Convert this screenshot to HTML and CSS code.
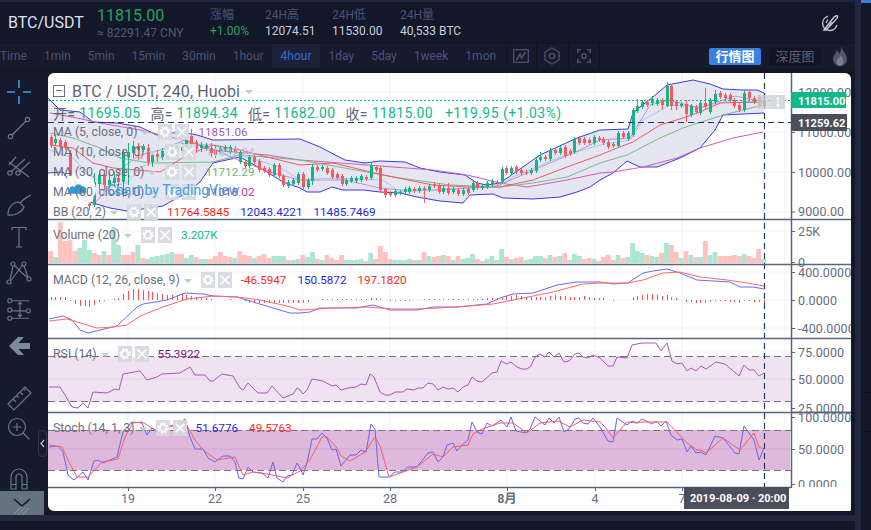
FILE: index.html
```html
<!DOCTYPE html>
<html lang="zh">
<head>
    <meta charset="UTF-8">
    <meta name="viewport" content="width=device-width, initial-scale=1.0">
    <title>BTC/USDT</title>
    <link rel="stylesheet" href="styles.css">
</head>
<body>
    <svg class="defs" width="0" height="0">
        <symbol id="gear" viewBox="0 0 14 16">
            <circle cx="7" cy="8" r="3.4" fill="none" stroke="#fff" stroke-width="2"/>
            <circle cx="7" cy="8" r="4.9" fill="none" stroke="#fff" stroke-width="1.4" stroke-dasharray="2 1.85"/>
        </symbol>
        <symbol id="cross" viewBox="0 0 14 16">
            <path d="M2.5 3.5 L11.5 12.5 M11.5 3.5 L2.5 12.5" stroke="#fff" stroke-width="1.6"/>
        </symbol>
    </svg>

    <div class="app">
        <div class="workspace">
            <header class="ticker">
                <div class="symbol">BTC/USDT</div>
                <div class="last">
                    <div class="last-price">11815.00</div>
                    <div class="last-cny">≈ 82291.47 CNY</div>
                </div>
                <div class="stat stat-change"><span class="stat-name">涨幅</span><span class="stat-up">+1.00%</span></div>
                <div class="stat stat-high"><span class="stat-name">24H高</span><span class="stat-value">12074.51</span></div>
                <div class="stat stat-low"><span class="stat-name">24H低</span><span class="stat-value">11530.00</span></div>
                <div class="stat"><span class="stat-name">24H量</span><span class="stat-value">40,533 BTC</span></div>
                <svg class="theme-icon" viewBox="0 0 18 18" width="18" height="18">
                    <path d="M7 2.300 A7.200 7.200 0 1 0 15.800 11" fill="none" stroke="#b4b8c3" stroke-width="1.500"/>
                    <path d="M3 16 L13 3 Q16 0.8 16.6 2.2 Q17 4 14.5 6 L5 16 Z" fill="none" stroke="#c6cad3" stroke-width="1.400"/>
                    <path d="M7 5.5 L5 9 M10.5 8 L8 12" stroke="#c6cad3" stroke-width="1.300"/>
                </svg>
            </header>

            <nav class="intervals">
                <a class="interval">Time</a>
                <a class="interval">1min</a>
                <a class="interval">5min</a>
                <a class="interval">15min</a>
                <a class="interval">30min</a>
                <a class="interval">1hour</a>
                <a class="interval active">4hour</a>
                <a class="interval">1day</a>
                <a class="interval">5day</a>
                <a class="interval">1week</a>
                <a class="interval">1mon</a>
                <span class="tool-cell first">
                    <svg viewBox="0 0 16 14" width="16" height="14">
                        <path d="M0.7 0.7 H15.3 V13.3 H0.7 Z" fill="none" stroke="#4a506c" stroke-width="1.3"/>
                        <path d="M3.5 11 L7 5 L8.5 9 L12.5 3" fill="none" stroke="#4a506c" stroke-width="1.6"/>
                    </svg>
                </span>
                <span class="tool-cell">
                    <svg viewBox="0 0 16 18" width="16" height="18">
                        <path d="M8 1 L15 5 V13 L8 17 L1 13 V5 Z" fill="none" stroke="#4a506c" stroke-width="1.4"/>
                        <circle cx="8" cy="9" r="2.6" fill="none" stroke="#4a506c" stroke-width="1.4"/>
                    </svg>
                </span>
                <span class="tool-cell">
                    <svg viewBox="0 0 14 14" width="14" height="14">
                        <path d="M0.7 4 V0.7 H4 M10 0.7 H13.3 V4 M13.3 10 V13.3 H10 M4 13.3 H0.7 V10" fill="none" stroke="#4a506c" stroke-width="1.4"/>
                        <circle cx="7" cy="7" r="2.4" fill="none" stroke="#4a506c" stroke-width="1.4"/>
                    </svg>
                </span>
                <a class="view-btn on">行情图</a>
                <a class="view-btn">深度图</a>
                <svg class="flame" viewBox="0 0 14 20" width="14" height="20">
                    <path d="M8 0 C9 5 14 7 14 13 C14 17 11 20 7 20 C3 20 0 17 0 13 C0 9 3 8 4 4 C5 5 6 7 6 8 C7.500 6 8.500 3 8 0 Z" fill="#50556a"/>
                    <path d="M8 9 C9 12 10.500 13 10.500 15.500 C10.500 18 9 20 7 20 C5 20 3.500 18 3.500 16 C3.500 13.500 6.500 12.500 8 9 Z" fill="#7b8092"/>
                </svg>
            </nav>

            <div class="body-row">
                <aside class="tools">
                    <svg class="tool" viewBox="0 0 24 24"><path d="M12 0 V8 M12 16 V24 M0 12 H8 M16 12 H24" class="tool-on"/></svg>
                    <svg class="tool" viewBox="0 0 24 24"><circle cx="3.500" cy="20.500" r="2.200"/><circle cx="20.500" cy="3.500" r="2.200"/><path d="M5 19 L19 5"/></svg>
                    <svg class="tool" viewBox="0 0 24 24"><circle cx="3" cy="20" r="2.200"/><circle cx="11" cy="20" r="2.200"/><path d="M2 9 L22 24 M4.500 18.500 L18 6 M12.500 18.500 L23 9 M2 12 L9 4"/></svg>
                    <svg class="tool" viewBox="0 0 24 24"><path d="M1 22 C0.500 15 6 9 12 9 L17 14 C15 19 8 23 1 22 Z M14 10 C15 6 19 5 24 2"/></svg>
                    <svg class="tool" viewBox="0 0 24 24"><path d="M5 2 C5 3 5 4 5 5 M5 2.500 H19 M19 2 V5 M12 2.500 V22 M9 22 H15"/></svg>
                    <svg class="tool" viewBox="0 0 24 24"><circle cx="6" cy="3" r="2"/><circle cx="17" cy="3" r="2"/><circle cx="2" cy="21" r="2"/><circle cx="22" cy="18" r="2"/><path d="M7.500 4.500 L14 11 L21 17 M15.500 4 L4 19.500 M6 5 L3 19 M17 5 L21 16"/></svg>
                    <svg class="tool" viewBox="0 0 26 24"><circle cx="3" cy="3" r="2.200"/><circle cx="3" cy="13" r="2.200"/><circle cx="3" cy="22" r="2.200"/><circle cx="23" cy="14" r="2.200"/><path d="M5 3 H24 M5 14 H21 M5 22 H24 M14 5 V20 M12 7 L14 4.500 L16 7 M12 18 L14 20.500 L16 18"/></svg>
                    <svg class="tool" viewBox="0 0 24 24"><path class="tool-solid" d="M2 12 L11 3 H17 L11.500 9 H23 V15 H11.500 L17 21 H11 Z"/></svg>
                    <svg class="tool" viewBox="0 0 24 24"><path d="M1 18 L18 1 L24 7 L7 24 Z M6 13 L9 16 M9.500 9.500 L11.500 11.500 M13 6 L16 9 M16.500 2.500 L18.500 4.500"/></svg>
                    <svg class="tool" viewBox="0 0 24 24"><circle cx="10" cy="10" r="8.500"/><path d="M10 6 V14 M6 10 H14 M16 16 L22.500 22.500"/></svg>
                    <svg class="tool" viewBox="0 0 24 24"><path d="M4 23 V11 A8 8 0 0 1 20 11 V23 H15 V11 A3 3 0 0 0 9 11 V23 Z M4 18.500 H9 M15 18.500 H20"/></svg>
                    <div class="tool-more">
                        <svg viewBox="0 0 18 17" width="18" height="17">
                            <path d="M1 1 L9 8 L17 1" fill="none" stroke="#14181f" stroke-width="1.500"/>
                            <path d="M1 16 L9 8.500 M5 17 L13 9 M9 17 L16 10" fill="none" stroke="#818c97" stroke-width="1.200"/>
                        </svg>
                    </div>
                    <span class="collapse">
                        <svg viewBox="0 0 5 9" width="5" height="9"><path d="M4 1 L1 4.500 L4 8" fill="none" stroke="#c3c7d2" stroke-width="1.200"/></svg>
                    </span>
                </aside>

                <main class="chart">
                    <svg id="plot" class="plot" viewBox="48 73 803 438" width="803" height="438"></svg>

                    <section class="pane pane-main">
                        <div class="title-row">
                            <span class="fold"></span>
                            <span class="title">BTC / USDT, 240, Huobi</span><i class="caret"></i>
                        </div>
                        <div class="ohlc">
                            <span class="ohlc-name">开=</span><span class="ohlc-val">11695.05</span>
                            <span class="ohlc-name">高=</span><span class="ohlc-val">11894.34</span>
                            <span class="ohlc-name">低=</span><span class="ohlc-val">11682.00</span>
                            <span class="ohlc-name">收=</span><span class="ohlc-val">11815.00</span>
                            <span class="ohlc-val ohlc-diff">+119.95 (+1.03%)</span>
                        </div>
                        <div class="study">
                            <span class="study-name">MA (5, close, 0)</span><i class="caret"></i>
                            <span class="study-btn"><svg><use href="#gear"/></svg></span><span class="study-btn"><svg><use href="#cross"/></svg></span>
                            <span class="val c-purple">11851.06</span>
                        </div>
                        <div class="study">
                            <span class="study-name">MA (10, close, 0)</span><i class="caret"></i>
                            <span class="study-btn"><svg><use href="#gear"/></svg></span><span class="study-btn"><svg><use href="#cross"/></svg></span>
                            <span class="val c-sky">11827.24</span>
                        </div>
                        <div class="study">
                            <span class="study-name">MA (30, close, 0)</span><i class="caret"></i>
                            <span class="study-btn"><svg><use href="#gear"/></svg></span><span class="study-btn"><svg><use href="#cross"/></svg></span>
                            <span class="val c-green">11712.29</span>
                        </div>
                        <div class="study">
                            <span class="study-name">MA (60, close, 0)</span><i class="caret"></i>
                            <span class="study-btn"><svg><use href="#gear"/></svg></span><span class="study-btn"><svg><use href="#cross"/></svg></span>
                            <span class="val c-magenta">11018.02</span>
                        </div>
                        <div class="study">
                            <span class="study-name">BB (20, 2)</span><i class="caret"></i>
                            <span class="study-btn"><svg><use href="#gear"/></svg></span><span class="study-btn"><svg><use href="#cross"/></svg></span>
                            <span class="val c-red">11764.5845</span>
                            <span class="val c-blue">12043.4221</span>
                            <span class="val c-blue">11485.7469</span>
                        </div>
                        <div class="watermark">
                            <span class="wm-logo">
                                <svg viewBox="0 0 24 14" width="20" height="12"><path d="M5 14 C1 14 0 10 3 8.500 C3 5 7 4 9 6 C10 2 16 1 18 5 C22 5 24 8 23 11 C22.500 13 21 14 19 14 Z" fill="#2f9fe0"/></svg>
                            </span>
                            <span class="wm-text">Chart by TradingView</span>
                        </div>
                    </section>

                    <section class="pane pane-vol">
                        <div class="study">
                            <span class="study-name">Volume (20)</span><i class="caret"></i>
                            <span class="study-btn"><svg><use href="#gear"/></svg></span><span class="study-btn"><svg><use href="#cross"/></svg></span>
                            <span class="val c-teal">3.207K</span>
                        </div>
                    </section>

                    <section class="pane pane-macd">
                        <div class="study">
                            <span class="study-name">MACD (12, 26, close, 9)</span><i class="caret"></i>
                            <span class="study-btn"><svg><use href="#gear"/></svg></span><span class="study-btn"><svg><use href="#cross"/></svg></span>
                            <span class="val c-red">-46.5947</span>
                            <span class="val c-blue">150.5872</span>
                            <span class="val c-red">197.1820</span>
                        </div>
                    </section>

                    <section class="pane pane-rsi">
                        <div class="study">
                            <span class="study-name">RSI (14)</span><i class="caret"></i>
                            <span class="study-btn"><svg><use href="#gear"/></svg></span><span class="study-btn"><svg><use href="#cross"/></svg></span>
                            <span class="val c-plum">55.3922</span>
                        </div>
                    </section>

                    <section class="pane pane-stoch">
                        <div class="study">
                            <span class="study-name">Stoch (14, 1, 3)</span><i class="caret"></i>
                            <span class="study-btn"><svg><use href="#gear"/></svg></span><span class="study-btn"><svg><use href="#cross"/></svg></span>
                            <span class="val c-blue">51.6776</span>
                            <span class="val c-red">49.5763</span>
                        </div>
                    </section>
                </main>
            </div>

            <div class="foot-strip"></div>
        </div>

        <div class="rail">
            <div class="rail-tab"></div>
            <div class="rail-line"></div>
            <div class="rail-line second"></div>
        </div>
    </div>

    <script src="chart.js"></script>
</body>
</html>
```

FILE: styles.css
```css
* { box-sizing: border-box; }
html, body { margin: 0; height: 100%; }
body { background: #131728; font-family: Roboto, "Noto Sans CJK SC", sans-serif; overflow: hidden; }
.defs { position: absolute; }
.app { display: flex; width: 871px; height: 530px; }
.workspace { width: 855px; border-top: 2px solid #22273f; }

/* top ticker */
.ticker { display: flex; align-items: center; height: 42px; background: #13172a; border-bottom: 1px solid #0f1322; padding-left: 8px; position: relative; }
.symbol { width: 89px; font-size: 16px; color: #dde1ec; }
.last { width: 113px; }
.last-price { font-size: 16px; line-height: 20px; color: #27a35e; }
.last-cny { font-size: 12px; line-height: 14px; color: #535a78; }
.stat { display: flex; flex-direction: column; width: 55px; font-size: 12px; line-height: 16px; }
.stat-high { width: 67px; }
.stat-low { width: 68px; }
.stat-name { color: #4c5375; }
.stat-up { color: #27a35e; }
.stat-value { color: #c9cede; white-space: nowrap; }
.theme-icon { margin-left: auto; margin-right: 16px; }

/* interval bar */
.intervals { display: flex; align-items: center; height: 24px; background: #161a2d; margin-bottom: 5px; padding-left: 0; }
.interval { font-size: 12px; line-height: 24px; padding: 0 8.5px; color: #4c5375; white-space: nowrap; }
.interval:first-child { margin-left: -8.5px; }
.interval.active { background: #1c2138; color: #2d6fd9; }
.tool-cell { display: flex; align-items: center; justify-content: center; width: 31.500px; height: 24px; border-right: 1px solid #10131f; }
.tool-cell.first { border-left: 1px solid #10131f; margin-left: 1px; }
.view-btn { width: 52px; height: 17px; line-height: 17px; text-align: center; font-size: 13px; border-radius: 2px; background: #111423; color: #5b6077; margin-right: 8px; }
.view-btn.on { margin-left: auto; background: #3b80e0; color: #fff; font-weight: 700; }
.flame { margin: 0 8px 0 4px; }

/* body */
.body-row { display: flex; height: 438px; }
.tools { position: relative; width: 48px; padding: 7px 0 0 7px; background: #161a2d; display: grid; grid-template-columns: 24px; grid-template-rows: 36px 37px 40px 32px 36px 36px 37px 52px 31px 49px 25px; }
.tool { width: 24px; height: 24px; overflow: visible; fill: none; stroke: #66788c; stroke-width: 1.2; }
.tool-on { stroke: #35a7d8; stroke-width: 1.5; }
.tool-solid { fill: #7c8a99; stroke: none; }
.tool-more { display: flex; justify-content: center; padding-top: 7px; width: 44px; height: 24px; margin-left: -7px; background: #66727f; }
.collapse { position: absolute; left: 38px; top: 357px; z-index: 2; width: 9px; height: 27px; display: flex; align-items: center; justify-content: center; background: #161a2d; border: 1px solid #343a50; border-radius: 4px; }

/* chart */
.chart { position: relative; width: 803px; height: 438px; background: #fff; overflow: hidden; border-radius: 6px 6px 2px 6px; }
.plot { position: absolute; left: 0; top: 0; display: block; }
.pane { position: relative; padding: 6px 0 0 5px; }
.pane-main { height: 147px; padding-top: 9px; }
.pane-vol { height: 45px; }
.pane-macd { height: 74px; }
.pane-rsi { height: 74px; }
.pane-stoch { height: 75px; }

.title-row { display: flex; align-items: center; height: 18px; margin-bottom: 3px; }
.fold { width: 12px; height: 12px; margin-right: 7px; border: 1px solid #69707f; position: relative; }
.fold::after { content: ""; position: absolute; left: 2px; right: 2px; top: 4px; border-top: 1px solid #69707f; }
.title { font-size: 16px; letter-spacing: .12px; color: #5d6478; }
.title + .caret { margin-left: 5px; }
.ohlc { display: flex; align-items: center; height: 19px; font-size: 14px; letter-spacing: .3px; }
.ohlc-name { color: #5d6478; margin-right: 4px; }
.ohlc-val { color: #14b88a; margin-right: 10px; }
.ohlc-diff { margin-left: 2px; letter-spacing: .45px; }

.study { position: relative; z-index: 1; display: flex; align-items: center; height: 20px; font-size: 12.300px; color: #6a6f7e; white-space: nowrap; }
.pane:not(.pane-main) .study { height: 18px; }
.caret { display: inline-block; width: 0; height: 0; border-left: 4.500px solid transparent; border-right: 4.500px solid transparent; border-top: 4.500px solid #c5c9cf; margin: 1px 9px 0 4px; }
.study-btn { display: block; width: 14px; height: 16px; margin-right: 3px; background: #d6d9de; opacity: .92; }
.study-btn svg { display: block; width: 14px; height: 16px; }
.val { font-size: 11.700px; margin: 0 11px 0 6px; }
.val + .val { margin-left: 0; }
.c-purple { color: #9a5fc0; }
.c-sky { color: #a8c4e6; }
.c-green { color: #6fb07e; }
.c-magenta { color: #ae3a9d; }
.c-red { color: #ff1f1f; }
.c-blue { color: #1f1fe8; }
.c-teal { color: #14b88a; }
.c-plum { color: #850f85; }

/* logo sits under the legend rows, the words over them */
.watermark { position: absolute; left: 14px; top: 100px; display: flex; align-items: center; }
.wm-logo { position: relative; z-index: 0; display: flex; align-items: center; justify-content: flex-start; padding: 0 0 4px 5px; width: 34px; height: 34px; border-radius: 50%; background: rgba(255, 255, 255, .9); }
.wm-text { position: relative; z-index: 2; margin-left: 11px; font-size: 14px; color: #3d9fe0; }

.foot-strip { margin-top: 4px; height: 6px; background: #22273f; }

/* right rail */
.rail { position: relative; width: 16px; border-left: 6px solid #22273f; background: #131728; }
.rail-tab { height: 3px; background: #3a7ddb; }
.rail-line { margin-top: 389px; border-top: 1px solid #0d101c; }
.rail-line.second { margin-top: 38px; }

/* svg parts, set from chart.js */
.grid { stroke: #f1f3f7; stroke-width: 1; }
.sep { stroke: #5a6579; stroke-width: 1.5; }
.tick { stroke: #5a6579; stroke-width: 1; }
.axis-text { font: 12.500px Roboto, sans-serif; fill: #666c80; letter-spacing: .1px; }
.time-text { font: 12.500px Roboto, "Noto Sans CJK SC", sans-serif; fill: #666c80; text-anchor: middle; }
.time-bold { font-weight: 700; }
.tag-text { font: 700 11px Roboto, sans-serif; fill: #fff; }
.line { fill: none; stroke-width: 1; stroke-linejoin: round; }
```

FILE: chart.js
```js
// 240 min BTC/USDT chart, everything below is in page pixels
var NS = 'http://www.w3.org/2000/svg';
var plot = document.getElementById('plot');

function el(tag, attrs, text) {
    var n = document.createElementNS(NS, tag);
    for (var k in attrs) n.setAttribute(k, attrs[k]);
    if (text) n.textContent = text;
    plot.appendChild(n);
    return n;
}
function line(x1, y1, x2, y2, cls, extra) {
    var a = { x1: x1, y1: y1, x2: x2, y2: y2, 'class': cls || '' };
    for (var k in extra) a[k] = extra[k];
    return el('line', a);
}
function poly(points, color, width, op) {
    el('polyline', { points: points, 'class': 'line', stroke: color, 'stroke-width': width || 1, opacity: op || 1 });
}

var GREEN = '#17b383', RED = '#f25c5f';
var STEP = 4.85, LAST_X = 763.5;

var candles = ('r137,145,135,148 g139,143,135,146 r140,147 r142,148 r153,177,150,179 r177,185 r185,195 r195,202 ' +
    'r201,206,199,210 g182,205,173,207 g175,184,172,190 r175,185,170,190 g180,185,172,188 g178,183,172,186 r178,182,172,186 ' +
    'g153,182,150,197 g152,157,143,185 g146,153,141,158 r146,150,143,160 g146,150 r148,162,144,166 g155,162,152,167 r154,157,150,162 ' +
    'g151,157,148,160 g150,155,148,158 g148,153 g148,151 g147,151,143,153 g136,148,132,152 r136,144,129,148 r142,149,140,153 ' +
    'g145,148,142,152 g145,149 r148,153,143,157 r150,155,146,158 g148,152 g147,150 g147,152 r148,152 g153,162 r162,166 g157,166 ' +
    'r157,162 r161,170 r168,171 r169,175 g165,175 r165,176 r176,185 g182,186 g180,184 g174,183 ' +
    'r174,187 g180,187 g167,181,164,185 r167,170 g167,169 r168,173 r170,177 r174,178 r176,184 g180,184 g178,181 g178,181 g176,180 ' +
    'r177,179 g165,178,163,180 r167,170 r168,190 r189,195,188,198 r193,195 g191,195 g192,193 g189,192 g188,192 r189,191 g188,191 ' +
    'r188,190,186,203 g186,190 r184,186 r185,192 g188,192 r188,193,183,195 g189,192 r190,194 g190,194 r189,193 g183,190 r183,188 ' +
    'g186,188 g183,187 g181,185 r182,183 g169,182 r168,173 g168,173 r167,172 r170,173 r172,173 g170,173 g160,171 g157,160,152,162 ' +
    'r157,159 g150,159 r150,153 g148,153 r147,156,145,158 r151,154 g139,152 r138,143 r139,143 r140,143 g137,143 r138,140 ' +
    'r139,143 r142,147 r144,146 g133,146 r133,137 g133,139 g110,135 g106,111,99,113 g102,107 r102,105 g99,103,96,106 g100,104 ' +
    'r100,105,98,110 g86,106,82,107 r86,106,84,110 r102,106,100,110 g104,106 r104,114,100,122 g106,115,104,117 r107,112 g103,113 ' +
    'r103,107,88,109 g100,112 g94,102,90,104 r93,97 r95,98 r95,100 r100,106 r105,110 g93,110,90,112 r92,98,90,100 r98,102 r97,106 g100,106')
    .split(' ').map(function (s) {
        var p = s.slice(1).split(',').map(Number);
        return { up: s[0] === 'g', top: p[0], bot: p[1], hi: p[2] || p[0] - 2, lo: p[3] || p[1] + 2 };
    });

// signed volume heights, + is green, - is red
var volume = [-12, 6, -41, -22, -23, -12, 15, 23, 13, -10, -8, 12, -8, 36, 18, -8, -8, -11, 18, -5, 4, 6, 7, 8, 9, 11, -9, -9, 5, 8, -6, 4, 4, -4, -7, -11, -7, -6, 5, -12, -8, -7, 5, -7, -9, -5, 7, 7,
    7, -3, 3, 4,
    -8, 6, 11, -4, 3, -8, -5, -3, -8, 3, 3, 3, 4, -2, 10, -4, -17, -11, -4, 3, 3, 3, 4, -3, 3, -11, 7, -6, -7, 8, -7, 3, -7, 4, 5, 9, -4, -2, 4, 7, 3, 14, -6, 4, -5, -6, 3, 4, 7, 7, -5, 8, -6, 7, -10, 3, 9, 7, -4, -5, 4, -2,
    -6, -8, -3, 8, -5, 6, 20, 12, 10, -8, 7, 6, -10, 20, -18, -11, 5, -12, 8, -6, 6, -22, 8, 11, -7, -7, -7, -8, -7, 9, -7, -5, -14, 4];

var hist = [3, 3, 3, 3, -1, -4, -6, -6, -7, -5, -2, -1, 0, 1, 2, 6, 9, 11, 11, 10, 9, 8, 7, 6, 5, 5, 5, 6, 5, 4, 3, 3, 2, 1, 0, 0, 0, 1, 0, 0, -1, -3, -3, -3, -3, -3, -3, -3, -3, -3, -3, -3,
    -3, -2, 0, 0, 1, 1, 1, 1, 1, 1, 1, 1, 1, 1, 2, 2, 1, 0, -1, -1, -1, -1, -1, 0, 0, 1, 1, 1, 1, 1, 1, 1, 1, 1, 1, 1, 1, 1, 2, 2, 2, 2, 4, 4, 5, 4, 3, 3, 3, 3, 3, 4, 5, 4, 4, 3, 3, 3, 4, 3, 2, 2,
    2, 0, -1, 0, 0, 0, 3, 4, 5, 6, 6, 5, 4, 5, 3, 2, 0, -2, -2, -3, -3, -3, -2, -1, -1, -1, -2, -2, -3, -1, -1, -2, -2, -3];

var bbUpper = [[48, 98], [60, 110], [80, 112], [93, 122], [117, 123], [140, 127], [157, 135], [180, 132], [197, 135], [213, 140], [300, 139], [320, 147], [345, 160], [365, 163], [380, 161], [405, 162], [420, 168], [440, 172], [465, 175], [477, 183], [487, 185], [500, 183], [540, 155], [577, 138], [600, 130], [628, 129], [633, 113], [640, 107], [653, 97], [667, 85], [693, 80], [710, 84], [723, 89], [743, 90], [757, 90], [764, 93]];
var bbLower = [[48, 173], [63, 172], [75, 190], [90, 202], [110, 208], [127, 211], [150, 208], [163, 206], [177, 198], [187, 193], [200, 182], [213, 163], [240, 157], [267, 172], [283, 182], [300, 188], [307, 192], [320, 192], [332, 187], [343, 190], [363, 190], [380, 192], [400, 193], [417, 197], [440, 201], [463, 203], [470, 195], [493, 194], [503, 198], [533, 199], [560, 197], [577, 192], [590, 187], [600, 180], [613, 173], [627, 161], [640, 167], [657, 167], [680, 158], [700, 148], [715, 130], [723, 115], [764, 113]];

function pts(a) { return a.map(function (p) { return p[0] + ',' + p[1]; }).join(' '); }

// grid
[128, 215, 303, 390, 507, 595, 682, 785].forEach(function (x) { line(x, 73, x, 487, 'grid'); });
[92, 132, 172, 212, 231, 272, 300, 328, 352, 379, 415, 449, 484].forEach(function (y) { line(48, y, 791, y, 'grid'); });

// oscillator bands
el('rect', { x: 48, y: 357, width: 742, height: 45, fill: '#efe3f1' });
el('rect', { x: 48, y: 430, width: 742, height: 40, fill: '#deb9dc' });
line(48, 379, 790, 379, '', { stroke: '#e4d6e8' });
line(48, 449, 790, 449, '', { stroke: '#d0a9d0' });

// bollinger
el('polygon', { points: pts(bbUpper) + ' ' + pts(bbLower.slice().reverse()), fill: '#e6e6f2' });
poly(pts(bbUpper), '#3a3ae8', 1.2);
poly(pts(bbLower), '#3a3ae8', 1.2);

poly('50,113 77,118 100,123 140,130 183,140 213,150 267,155 300,160 367,165 433,170 467,175 500,183 527,187 567,180 600,173 613,172 643,167 677,158 700,148 733,138 763,132', '#cc5fb5', 1.1);
poly('50,133 73,138 100,148 120,158 150,163 213,162 240,155 300,160 367,172 400,178 450,185 500,187 533,183 567,177 600,163 627,155 660,138 683,128 723,115 763,105', '#79b98a', 1);
poly('50,150 73,158 87,173 107,187 127,183 140,168 160,158 180,143 213,145 240,155 280,167 300,180 333,178 383,180 400,192 433,190 467,188 497,187 513,177 560,157 600,145 630,140 643,120 670,105 700,107 733,100 763,103', '#a9c6e8', 1);
poly('50,145 73,148 93,163 113,168 160,172 187,155 213,145 240,150 267,157 300,165 333,163 383,175 433,185 467,187 500,187 533,180 567,167 600,155 617,148 633,142 660,125 683,118 700,112 720,103 763,102', '#ef5a62', 1);
poly('93,205 110,186 123,167 140,155 160,150 185,140 215,150 238,160 270,172 300,180 345,180 380,188 400,190 440,190 497,186 520,176 550,163 580,150 600,140 630,138 650,105 668,100 700,108 735,96 763,102', '#b894d6', 1);

// candles
candles.forEach(function (c, i) {
    var x = LAST_X - STEP * (candles.length - 1 - i);
    var color = c.up ? GREEN : RED;
    var mid = Math.round(x) + 0.5;
    line(mid, c.hi, mid, c.lo, '', { stroke: color });
    el('rect', { x: mid - 1.5, y: c.top, width: 3, height: Math.max(c.bot - c.top, 1), fill: color });
});

// volume
volume.forEach(function (v, i) {
    var x = LAST_X - STEP * (volume.length - 1 - i);
    var h = Math.abs(v);
    el('rect', { x: x - 2.4, y: 263 - h, width: 4.85, height: h, fill: v > 0 ? '#ace5d2' : '#ffc2bf' });
});

// macd
hist.forEach(function (v, i) {
    if (!v) return;
    var x = Math.round(LAST_X - STEP * (hist.length - 1 - i)) + 0.5;
    line(x, 300, x, 300 - v, '', { stroke: '#ff4d4d' });
});
poly('49,319 63,316 72,320 80,330 88,333 117,326 137,307 143,304 167,300 185,293 203,294 213,296 237,297 263,305 290,313 300,313 310,312 320,308 337,308 357,308 373,305 390,310 417,310 433,307 457,307 487,304 500,298 513,294 533,293 557,285 577,282 600,282 613,284 628,283 643,273 653,271 667,269 680,273 697,280 730,282 740,287 753,287 764,289', '#6a6af5', 1.3);
poly('49,321 67,319 97,328 113,327 127,325 140,316 163,307 187,299 213,296 237,297 260,300 287,306 300,310 333,308 367,307 393,309 417,309 457,307 493,304 513,300 553,292 583,284 600,283 628,283 643,280 663,273 680,272 700,277 727,280 747,283 764,286', '#ff6a6a', 1.3);

// rsi
poly('49,387 60,387 65,395 72,407 78,408 83,403 88,408 93,392 107,393 115,389 119,390 123,374 140,371 147,380 157,377 162,374 180,373 190,367 195,375 205,375 210,381 213,381 222,374 233,376 240,388 243,390 248,383 258,393 267,393 272,386 283,398 293,394 297,388 300,390 303,394 307,390 312,379 323,381 332,386 336,385 341,390 348,388 356,387 361,384 366,385 370,374 374,377 380,392 385,395 390,395 395,392 403,392 407,389 414,390 418,388 423,388 428,383 433,384 438,390 443,387 448,389 453,388 458,392 463,387 468,385 472,377 477,381 482,382 492,373 497,372 501,361 507,364 511,362 517,367 522,369 527,369 531,366 535,357 540,354 545,357 549,352 554,357 559,353 564,362 569,361 575,354 579,353 583,357 588,358 593,355 600,358 608,366 613,366 617,357 627,358 632,345 642,343 656,343 661,351 667,343 672,361 677,364 682,363 687,371 691,368 696,371 701,366 706,369 716,362 725,364 739,376 744,365 749,370 754,370 759,376 764,373', '#a957b5', 1.1);

// stoch
poly('49,447 58,446 63,452 68,475 74,480 83,472 88,480 94,461 98,460 103,463 117,457 123,432 132,422 142,423 147,435 152,428 157,432 162,427 175,425 185,419 190,437 195,449 203,449 208,458 215,462 223,456 230,456 235,462 239,478 243,479 248,467 253,472 262,473 268,478 273,462 277,478 283,482 287,476 292,475 297,463 300,468 303,475 307,463 312,439 317,439 322,433 327,438 332,450 336,449 341,466 350,455 356,455 361,450 366,452 371,424 375,429 379,477 389,477 395,472 402,472 408,467 417,467 428,453 433,452 438,462 443,457 447,445 453,443 457,451 462,445 468,440 472,422 477,432 482,434 487,423 492,426 501,420 507,427 511,417 516,431 526,433 530,429 535,417 545,425 549,418 554,423 559,417 564,432 569,429 575,419 579,418 583,423 588,424 593,418 600,427 608,441 613,442 617,418 627,425 632,421 637,423 642,419 652,424 656,421 661,426 666,421 671,435 677,440 682,439 687,452 691,446 696,453 701,452 706,455 715,436 723,438 735,453 739,454 744,426 754,440 759,460 764,448', '#6565f0', 1);
poly('49,445 62,447 68,460 77,477 88,477 102,462 118,459 125,437 133,423 142,422 157,431 185,422 195,440 203,450 217,460 235,457 243,475 253,472 267,474 287,478 300,471 310,460 322,437 327,437 337,448 341,456 350,461 365,452 375,437 380,446 389,477 417,467 433,454 443,457 453,447 468,445 473,434 482,429 500,423 513,423 527,433 540,423 558,421 570,427 583,420 600,422 605,427 613,438 627,422 637,423 643,422 667,422 687,443 690,445 697,450 701,450 706,453 723,438 740,450 754,433 759,447 764,449', '#fa5c66', 1);

[356.5, 401.5, 430.5, 470.5].forEach(function (y) {
    line(48, y, 791, y, '', { stroke: '#7d6f85', 'stroke-dasharray': '7 4', 'stroke-width': 1.2 });
});

// price lines and crosshair
line(48, 100.5, 791, 100.5, '', { stroke: '#12b886', 'stroke-dasharray': '2 2' });
line(48, 122.5, 791, 122.5, '', { stroke: '#24395a', 'stroke-dasharray': '6 4', 'stroke-width': 1.2 });
line(764.5, 73, 764.5, 487, '', { stroke: '#24395a', 'stroke-dasharray': '6 4', 'stroke-width': 1.2 });

// pane separators and axis
[219.5, 264.5, 338.5, 412.5].forEach(function (y) { line(48, y, 851, y, 'sep'); });
line(48, 487.5, 791, 487.5, 'sep');
line(791.5, 73, 791.5, 488, 'sep');

var labels = [[92, '12000.00'], [132, '11000.00'], [172, '10000.00'], [211.500, '9000.00'], [231, '25K'], [262, '0'], [272, '400.0000'], [300, '0.0000'], [328, '-400.0000'], [352, '75.0000'], [379, '50.0000'], [408, '25.0000'], [417, '100.0000'], [449, '50.0000'], [484, '0.0000']];
labels.forEach(function (l) {
    line(791, l[0] + 0.5, 795, l[0] + 0.5, 'tick');
    el('text', { x: 798, y: l[0] + 4.5, 'class': 'axis-text' }, l[1]);
});
// white mask so the last stoch labels get cut at the pane edges
el('rect', { x: 793, y: 487, width: 58, height: 24, fill: '#fff' });
line(791, 412.5, 851, 412.5, 'sep');

var times = [[128, '19'], [215, '22'], [303, '25'], [390, '28'], [507, '8月'], [595, '4'], [682, '7']];
times.forEach(function (t) {
    line(t[0] + 0.5, 488, t[0] + 0.5, 491, 'tick');
    el('text', { x: t[0], y: 503, 'class': 'time-text' + (t[1] === '8月' ? ' time-bold' : '') }, t[1]);
});

// small buttons beside the last price
el('rect', { x: 757, y: 95, width: 14, height: 14, fill: '#cdd0d6', opacity: .75 });
el('rect', { x: 771, y: 95, width: 14, height: 14, fill: '#d6d9de' });
el('path', { d: 'M778 97 L775.500 99.500 H780.500 Z M778 107 L775.500 104.500 H780.500 Z M777.500 99 H778.500 V105 H777.500 Z', fill: '#fff' });

// price tags
el('rect', { x: 791, y: 92, width: 55, height: 16, fill: '#12b886' });
el('text', { x: 798, y: 104.500, 'class': 'tag-text' }, '11815.00');
el('rect', { x: 791, y: 114, width: 56, height: 17, fill: '#4a4f5b' });
el('text', { x: 798, y: 126.500, 'class': 'tag-text' }, '11259.62');

// time tooltip
el('rect', { x: 684, y: 487, width: 105, height: 22, fill: '#4a4f5b' });
el('text', { x: 690, y: 502, 'class': 'tag-text' }, '2019-08-09 · 20:00');
```
